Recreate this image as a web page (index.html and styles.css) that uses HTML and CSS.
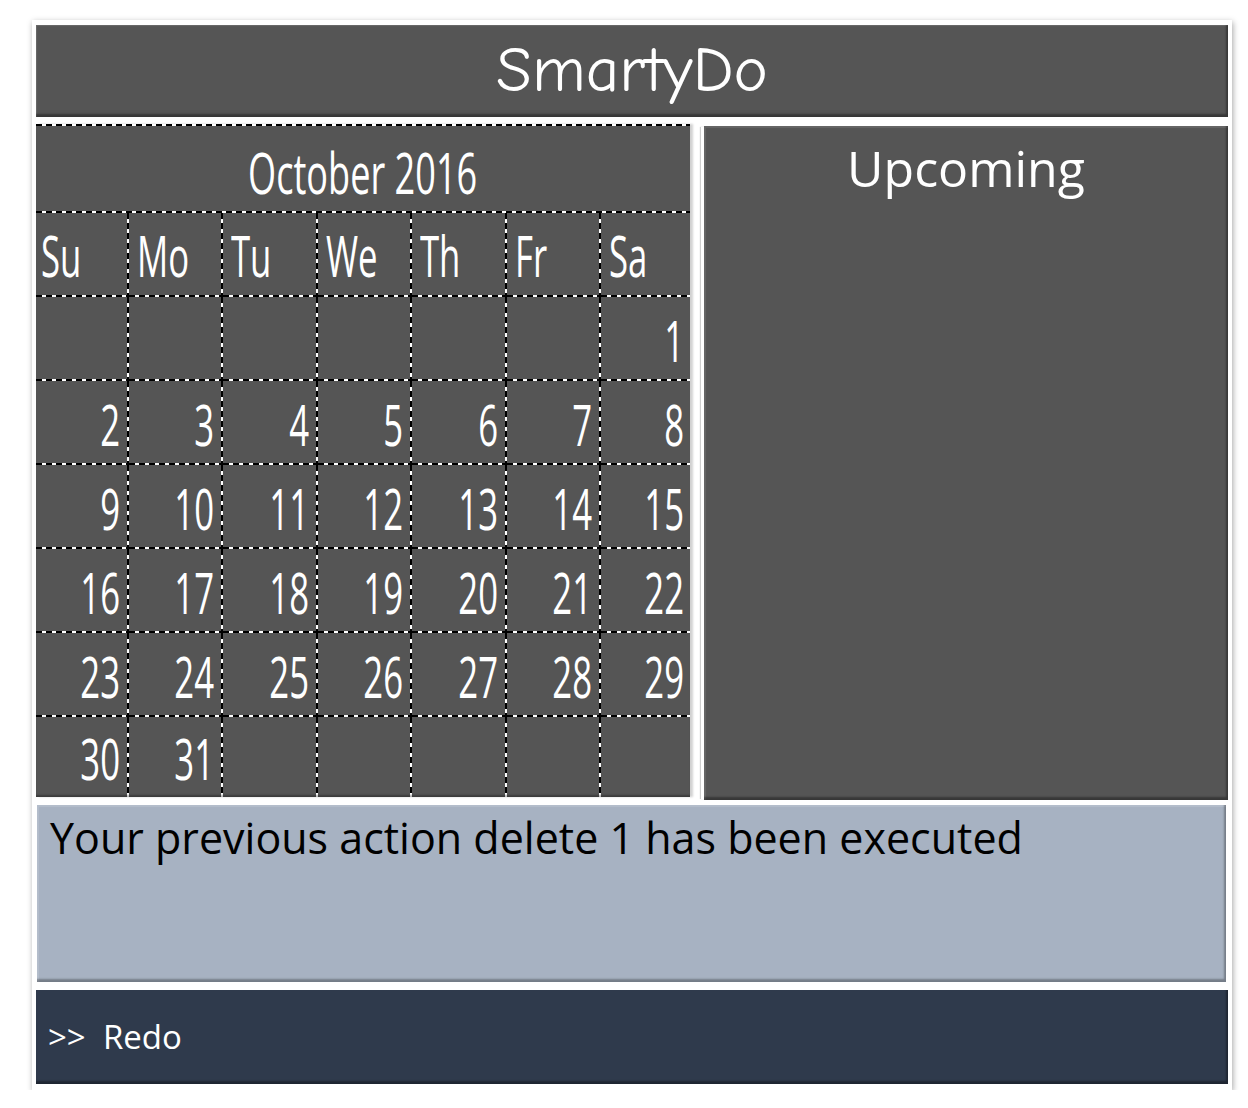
FILE: index.html
```html
<!DOCTYPE html>
<html lang="en">
<head>
<meta charset="utf-8">
<title>SmartyDo</title>
<link rel="stylesheet" href="styles.css">
</head>
<body>
<div class="card">
  <header class="header"><h1 class="brand">SmartyDo</h1></header>
  <div class="middle">
    <section class="calendar">
      <div class="cal-title"><span class="sq">October 2016</span></div>
      <div class="grid">
        <div class="cell dn"><span class="sq">Su</span></div>
        <div class="cell dn"><span class="sq">Mo</span></div>
        <div class="cell dn"><span class="sq">Tu</span></div>
        <div class="cell dn"><span class="sq">We</span></div>
        <div class="cell dn"><span class="sq">Th</span></div>
        <div class="cell dn"><span class="sq">Fr</span></div>
        <div class="cell dn"><span class="sq">Sa</span></div>

        <div class="cell"></div><div class="cell"></div><div class="cell"></div><div class="cell"></div><div class="cell"></div><div class="cell"></div><div class="cell"><span class="sq">1</span></div>

        <div class="cell"><span class="sq">2</span></div><div class="cell"><span class="sq">3</span></div><div class="cell"><span class="sq">4</span></div><div class="cell"><span class="sq">5</span></div><div class="cell"><span class="sq">6</span></div><div class="cell"><span class="sq">7</span></div><div class="cell"><span class="sq">8</span></div>

        <div class="cell"><span class="sq">9</span></div><div class="cell"><span class="sq">10</span></div><div class="cell"><span class="sq">11</span></div><div class="cell"><span class="sq">12</span></div><div class="cell"><span class="sq">13</span></div><div class="cell"><span class="sq">14</span></div><div class="cell"><span class="sq">15</span></div>

        <div class="cell"><span class="sq">16</span></div><div class="cell"><span class="sq">17</span></div><div class="cell"><span class="sq">18</span></div><div class="cell"><span class="sq">19</span></div><div class="cell"><span class="sq">20</span></div><div class="cell"><span class="sq">21</span></div><div class="cell"><span class="sq">22</span></div>

        <div class="cell"><span class="sq">23</span></div><div class="cell"><span class="sq">24</span></div><div class="cell"><span class="sq">25</span></div><div class="cell"><span class="sq">26</span></div><div class="cell"><span class="sq">27</span></div><div class="cell"><span class="sq">28</span></div><div class="cell"><span class="sq">29</span></div>

        <div class="cell last"><span class="sq">30</span></div><div class="cell last"><span class="sq">31</span></div><div class="cell last"></div><div class="cell last"></div><div class="cell last"></div><div class="cell last"></div><div class="cell last"></div>
      </div>
    </section>
    <section class="upcoming"><h2 class="up-title">Upcoming</h2></section>
  </div>
  <section class="message"><p class="msg-text">Your previous action delete 1 has been executed</p></section>
  <footer class="command"><span class="cmd-text">&gt;&gt;&nbsp; Redo</span></footer>
</div>
</body>
</html>
```

FILE: styles.css
```css
html, body {
  margin: 0;
  padding: 0;
  background: #ffffff;
}

body {
  font-family: "Open Sans", "Noto Sans", sans-serif;
  --dash-h: repeating-linear-gradient(to right, #000000 0 6px, #ffffff 6px 10px);
  --dash-v: repeating-linear-gradient(to bottom, #000000 0 6px, #ffffff 6px 10px);
}

.card {
  box-sizing: border-box;
  width: 1200px;
  height: 1070px;
  margin: 20px 0 0 32px;
  padding: 5px 4px 6px 4px;
  background: #ffffff;
  box-shadow: 1px 2px 6px rgba(0, 0, 0, 0.35);
  display: flex;
  flex-direction: column;
}

.header {
  height: 92px;
  flex: none;
  background: #555555;
  box-shadow: inset -2px -3px 2px rgba(0, 0, 0, 0.35), inset 1px 1px 1px rgba(255, 255, 255, 0.12);
  display: flex;
  align-items: center;
  justify-content: center;
}

.brand {
  margin: 0;
  font-family: "Comic Sans MS", "Comic Neue", "Open Sans", sans-serif;
  font-weight: 400;
  font-size: 65px;
  line-height: 1;
  color: #ffffff;
  padding-bottom: 2px;
}

.middle {
  margin-top: 7px;
  height: 676px;
  flex: none;
  display: flex;
  align-items: flex-start;
}

.calendar {
  box-sizing: border-box;
  width: 654px;
  height: 673px;
  flex: none;
  background: #555555;
  box-shadow: 3px 0 2px rgba(0, 0, 0, 0.18);
  display: flex;
  flex-direction: column;
  font-weight: 500;
}

.cal-title {
  box-sizing: border-box;
  height: 89px;
  flex: none;
  background:
    var(--dash-h) left top / 100% 2px no-repeat,
    var(--dash-h) left bottom / 100% 2px no-repeat,
    #555555;
  display: flex;
  align-items: center;
  justify-content: center;
  color: #ffffff;
  font-size: 56px;
  line-height: 56px;
  padding-top: 6px;
}

.grid {
  display: grid;
  grid-template-columns: 93px repeat(5, 94.4px) 89px;
  grid-template-rows: repeat(6, 84px) 80px;
}

.cell {
  box-sizing: border-box;
  background:
    var(--dash-v) right top / 2px 100% no-repeat,
    var(--dash-h) left bottom / 100% 2px no-repeat,
    #555555;
  display: flex;
  align-items: center;
  justify-content: flex-end;
  padding: 2px 9px 0 4px;
  color: #ffffff;
  font-size: 56px;
  line-height: 56px;
}

.cell:nth-child(7n) {
  background:
    var(--dash-h) left bottom / 100% 2px no-repeat,
    #555555;
  padding-right: 6px;
}

.cell.last {
  background:
    var(--dash-v) right top / 2px 100% no-repeat,
    #555555;
  box-shadow: inset 0 -3px 2px -1px rgba(0, 0, 0, 0.3);
}

.cell.last:nth-child(7n) {
  background: #555555;
}

.cell.dn {
  justify-content: flex-start;
  padding: 0 4px 0 8px;
}

.cell.dn:first-child {
  padding-left: 5px;
}

.sq {
  display: inline-block;
  white-space: nowrap;
  transform: scaleX(0.62);
  transform-origin: right center;
}

.cell.dn .sq {
  transform-origin: left center;
}

.cal-title .sq {
  transform: scaleX(0.645);
  transform-origin: center center;
}

.upcoming {
  box-sizing: border-box;
  margin: 2px 0 0 14px;
  width: 524px;
  height: 674px;
  flex: none;
  background: #555555;
  box-shadow: inset -2px -3px 2px rgba(0, 0, 0, 0.35), inset 2px 2px 1px rgba(255, 255, 255, 0.1), -4px 0 0 -1px #ffffff, -5px 0 1px -1px #cfcfcf;
  padding-top: 12px;
}

.up-title {
  margin: 0;
  text-align: center;
  font-weight: 400;
  font-size: 50px;
  line-height: 60px;
  color: #ffffff;
}

.message {
  box-sizing: border-box;
  margin: 5px 2px 0 1px;
  height: 177px;
  flex: none;
  background: #a7b2c2;
  box-shadow: inset -2px -3px 2px rgba(0, 0, 0, 0.3), inset 2px 2px 1px rgba(255, 255, 255, 0.15);
  padding: 7px 13px 0 13px;
}

.msg-text {
  margin: 0;
  font-size: 43px;
  line-height: 52px;
  color: #000000;
}

.command {
  box-sizing: border-box;
  margin-top: 8px;
  height: 94px;
  flex: none;
  background: #2f3a4c;
  box-shadow: inset -2px -3px 2px rgba(0, 0, 0, 0.35);
  display: flex;
  align-items: center;
  padding: 0 12px;
}

.cmd-text {
  font-size: 33px;
  line-height: 40px;
  color: #ffffff;
}
```
